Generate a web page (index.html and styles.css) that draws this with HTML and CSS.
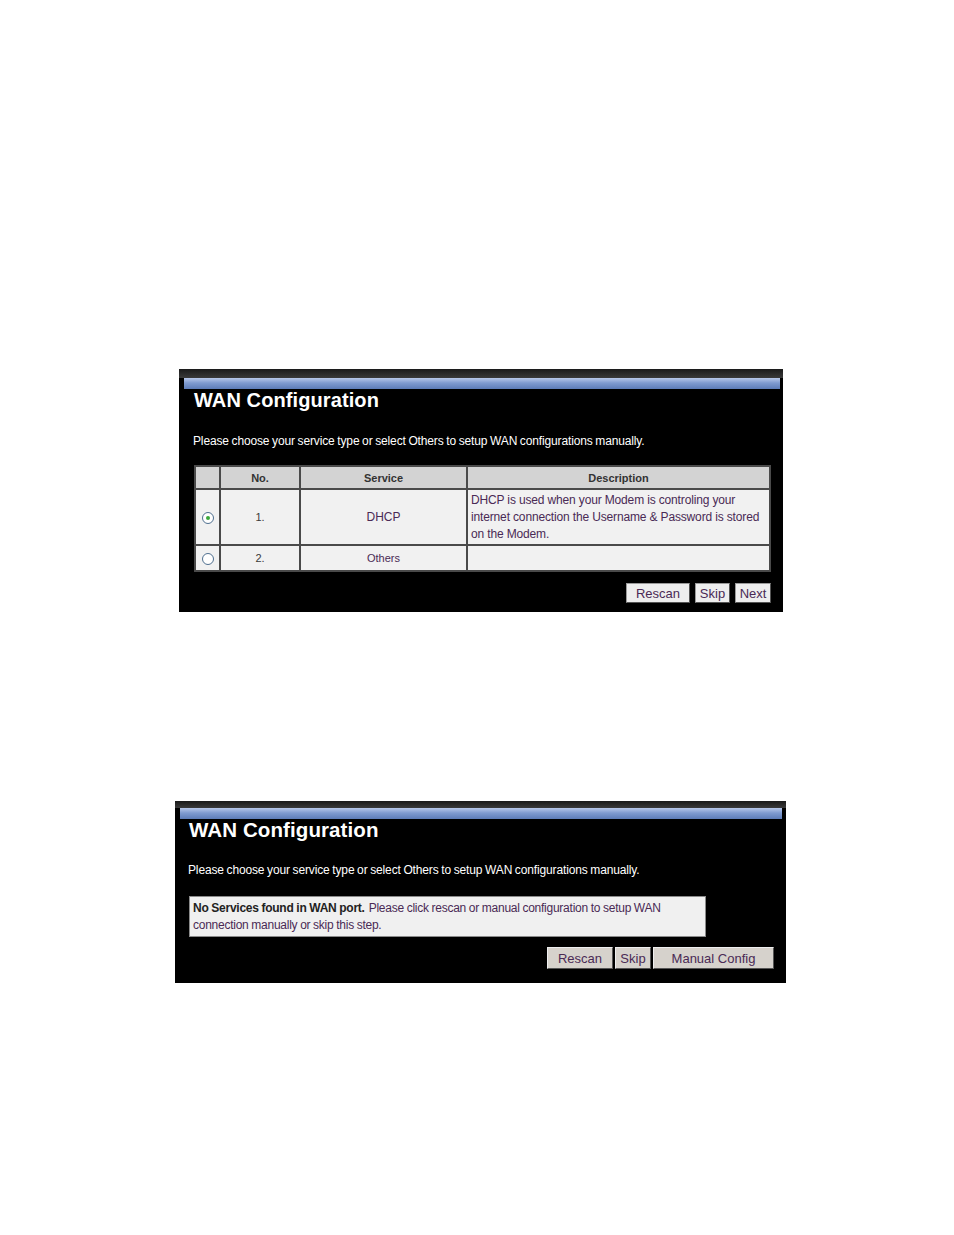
FILE: index.html
```html
<!DOCTYPE html>
<html>
<head>
<meta charset="utf-8">
<link rel="stylesheet" href="styles.css">
</head>
<body>
<div class="page">
  <div class="panel p1">
    <div class="topstrip"></div>
    <div class="bluebar"></div>
    <h1 class="title">WAN Configuration</h1>
    <p class="intro">Please choose your service type or select Others to setup WAN configurations manually.</p>
    <table class="svc">
      <tr class="head">
        <th class="c-radio"></th>
        <th class="c-no">No.</th>
        <th class="c-svc">Service</th>
        <th class="c-desc">Description</th>
      </tr>
      <tr class="r1">
        <td class="c-radio"><span class="radio checked"></span></td>
        <td class="c-no">1.</td>
        <td class="c-svc big">DHCP</td>
        <td class="c-desc desc">DHCP is used when your Modem is controling your internet connection the Username &amp; Password is stored on the Modem.</td>
      </tr>
      <tr class="r2">
        <td class="c-radio"><span class="radio"></span></td>
        <td class="c-no">2.</td>
        <td class="c-svc">Others</td>
        <td class="c-desc"></td>
      </tr>
    </table>
    <div class="buttons b1">
      <span class="btn w-rescan">Rescan</span>
      <span class="btn w-skip">Skip</span>
      <span class="btn w-next">Next</span>
    </div>
  </div>

  <div class="panel p2">
    <div class="topstrip"></div>
    <div class="bluebar"></div>
    <h1 class="title">WAN Configuration</h1>
    <p class="intro">Please choose your service type or select Others to setup WAN configurations manually.</p>
    <div class="notice"><b class="strong">No Services found in WAN port.</b><span class="rest">Please click rescan or manual configuration to setup WAN connection manually or skip this step.</span></div>
    <div class="buttons b2">
      <span class="btn2 w-rescan2">Rescan</span>
      <span class="btn2 w-skip2">Skip</span>
      <span class="btn2 w-manual">Manual Config</span>
    </div>
  </div>
</div>
</body>
</html>
```

FILE: styles.css
```css
html, body {
  margin: 0;
  padding: 0;
  background: #ffffff;
}
.page {
  width: 954px;
  height: 1235px;
  padding-top: 369px;
  box-sizing: border-box;
  font-family: "Liberation Sans", Arial, sans-serif;
}
.panel {
  background: #000;
  box-sizing: border-box;
  overflow: hidden;
}
.p1 {
  margin-left: 179px;
  width: 604px;
  height: 243px;
  padding: 0 3px 0 5px;
}
.p2 {
  margin-left: 175px;
  margin-top: 189px;
  width: 611px;
  height: 182px;
  padding: 0 4px 0 5px;
}
.topstrip {
  height: 9px;
  margin: 0 -3px 0 -5px;
  background: linear-gradient(#1a1a1a, #3a3a3a);
}
.p2 .topstrip {
  height: 7px;
  margin: 0 -4px 0 -5px;
}
.bluebar {
  height: 11px;
  background: linear-gradient(#b8c8ea, #7f9bd0 45%, #5d7cb8);
}
.title {
  margin: 0;
  color: #ffffff;
  font-size: 20px;
  font-weight: bold;
  line-height: 23px;
  padding: 0 0 0 10px;
  letter-spacing: 0.1px;
}
.p2 .title {
  line-height: 22px;
  padding-left: 9px;
  font-size: 20.5px;
}
.intro {
  color: #ffffff;
  margin: 0;
  font-size: 12px;
  line-height: 14px;
  padding: 22px 0 0 9px;
  letter-spacing: -0.14px;
  word-spacing: -0.5px;
}
.p2 .intro {
  padding: 22px 0 0 8px;
}
.svc {
  margin: 17px 0 0 10px;
  border-collapse: collapse;
  width: 577px;
}
.svc th, .svc td {
  border: 2px solid #4a4a4a;
  padding: 0;
  font-size: 11px;
  text-align: center;
}
.svc th {
  background: #d3d3d3;
  color: #333;
  font-weight: bold;
  height: 21px;
}
.svc td {
  background: #f1f1f1;
  color: #3a3a3a;
}
.c-radio { width: 23px; }
.c-no { width: 78px; }
.c-svc { width: 165px; }
.r1 td { height: 52px; }
.r2 td { height: 24px; }
.big {
  font-size: 12px !important;
  color: #4a2a55 !important;
}
.r2 .c-svc { color: #4a2a55; }
.desc {
  text-align: left !important;
  color: #4a2a55 !important;
  font-size: 12px !important;
  line-height: 17px;
  padding: 1px 2px 1px 3px !important;
  letter-spacing: -0.15px;
}
.radio {
  display: inline-block;
  width: 10px;
  height: 10px;
  border: 1px solid #4f6f8f;
  border-radius: 50%;
  background: #fff;
  position: relative;
  vertical-align: middle;
}
.radio.checked::after {
  content: "";
  position: absolute;
  left: 3px;
  top: 3px;
  width: 4px;
  height: 4px;
  border-radius: 50%;
  background: #3aa83a;
}
.buttons {
  display: flex;
  justify-content: flex-end;
}
.b1 {
  gap: 5px;
  margin-top: 11px;
  padding-right: 9px;
}
.btn {
  display: inline-flex;
  align-items: center;
  justify-content: center;
  height: 20px;
  box-sizing: border-box;
  background: #eeeeee;
  border: 1px solid #9a9a9a;
  border-right-color: #555;
  border-bottom-color: #555;
  color: #4a2a55;
  font-size: 13px;
}
.w-rescan { width: 64px; }
.w-skip { width: 35px; }
.w-next { width: 36px; }
.notice {
  margin: 19px 0 0 9px;
  width: 517px;
  height: 41px;
  box-sizing: border-box;
  background: #f0f0f0;
  border: 1px solid #8a8a8a;
  color: #4a2a55;
  font-size: 12px;
  line-height: 17px;
  padding: 3px 3px 2px;
  letter-spacing: -0.25px;
  word-spacing: -0.3px;
}
.strong {
  color: #222;
  margin-right: 4px;
}
.b2 {
  gap: 2px;
  margin-top: 10px;
  padding-right: 8px;
}
.btn2 {
  display: inline-flex;
  align-items: center;
  justify-content: center;
  height: 22px;
  box-sizing: border-box;
  background: #d6d2cc;
  border: 1px solid #eee;
  border-right-color: #555;
  border-bottom-color: #555;
  color: #4a2a55;
  font-size: 13px;
}
.w-rescan2 { width: 66px; }
.w-skip2 { width: 36px; }
.w-manual { width: 121px; }
```
